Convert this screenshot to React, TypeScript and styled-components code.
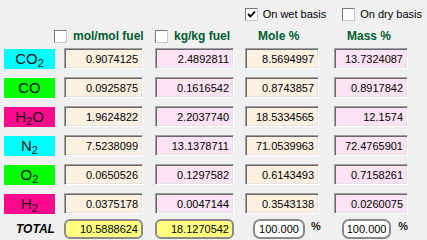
import React from "react"
import styled, { createGlobalStyle } from "styled-components"

const GlobalStyle = createGlobalStyle`
  html, body {
    margin: 0;
    padding: 0;
    background: #f0f0f0;
  }
  body {
    font-family: "Liberation Sans", Arial, sans-serif;
    width: 427px;
    height: 240px;
    overflow: hidden;
  }
`

const Panel = styled.div`
  width: 427px;
  height: 240px;
  background: #f0f0f0;
  display: flex;
  flex-direction: column;
  box-sizing: border-box;
  padding-top: 8px;
`

const TopBar = styled.div`
  display: flex;
  justify-content: flex-end;
  gap: 16px;
  padding-right: 5px;
  height: 13px;
`

const CheckLabel = styled.label`
  display: flex;
  align-items: center;
  gap: 5px;
  font-size: 11px;
  color: #000;
  line-height: 13px;
`

const Box = styled.span`
  width: 13px;
  height: 13px;
  box-sizing: border-box;
  background: #fff;
  border: 1px solid;
  border-color: #7a7a7a #c8c8c8 #c8c8c8 #7a7a7a;
  display: inline-flex;
  align-items: center;
  justify-content: center;
  flex-shrink: 0;
`

const Grid = styled.div`
  display: grid;
  grid-template-columns: 60px 91px 90px 89px 74px;
  padding-left: 4px;
  align-items: center;
`

const HeaderGrid = styled(Grid)`
  margin-top: 8px;
  height: 13px;
`

const BodyGrid = styled(Grid)`
  margin-top: 6px;
  grid-auto-rows: 21px;
  row-gap: 8px;
`

const TotalGrid = styled(Grid)`
  margin-top: 4px;
  height: 21px;
`

const HeaderCell = styled.div<{ $shift: number }>`
  display: flex;
  align-items: center;
  gap: 6px;
  margin-left: ${(p) => p.$shift}px;
  white-space: nowrap;
  font-weight: bold;
  font-size: 12px;
  color: #005c30;
`

const Species = styled.div<{ $bg: string }>`
  width: 51px;
  height: 20px;
  background: ${(p) => p.$bg};
  display: flex;
  align-items: center;
  justify-content: center;
  font-size: 15px;
  color: #111;
  line-height: 20px;
`

const Formula = styled.span`
  sub {
    font-size: 11px;
    vertical-align: -3px;
    line-height: 0;
  }
`

const Value = styled.div<{ $bg: string; $w: number }>`
  width: ${(p) => p.$w}px;
  height: 21px;
  box-sizing: border-box;
  background: ${(p) => p.$bg};
  border: 1px solid;
  border-color: #a0a0a0 #ffffff #ffffff #a0a0a0;
  box-shadow: inset 1px 1px 0 #696969, inset -1px -1px 0 #e3e3e3;
  display: flex;
  align-items: center;
  justify-content: flex-end;
  padding-right: 4px;
  font-size: 11px;
  color: #000;
`

const TotalLabel = styled.div`
  font-weight: bold;
  font-style: italic;
  font-size: 12px;
  color: #000;
  padding-left: 12px;
`

const TotalBox = styled.div`
  width: 79px;
  height: 20px;
  box-sizing: border-box;
  background: #ffff80;
  border: 2px solid #8a8a8a;
  border-radius: 6px;
  display: flex;
  align-items: center;
  justify-content: flex-end;
  padding-right: 3px;
  font-size: 11px;
  color: #000;
`

const PercentWrap = styled.div<{ $shift: number; $gap: number }>`
  display: flex;
  align-items: center;
  gap: ${(p) => p.$gap}px;
  margin-left: ${(p) => p.$shift}px;
`

const PercentBox = styled.div`
  width: 52px;
  height: 20px;
  box-sizing: border-box;
  background: #fff;
  border: 2px solid #8a8a8a;
  border-radius: 7px;
  display: flex;
  align-items: center;
  justify-content: center;
  font-size: 11px;
  color: #000;
  margin-top: 1px;
`

const Pct = styled.span`
  font-size: 11px;
  font-weight: bold;
  color: #222;
  margin-top: -5px;
`

const Check = () => (
  <svg width="9" height="9" viewBox="0 0 9 9">
    <path d="M1 4 L3.5 6.5 L8 1.5" stroke="#000" strokeWidth="1.8" fill="none" />
  </svg>
)

const CYAN = "#00ffff"
const GREEN = "#00ff00"
const PINK = "#ff0a8c"
const LINEN = "#fdf0e1"
const BLUSH = "#fde3f3"

const rows = [
  { name: "CO", sub: "2", bg: CYAN, v: ["0.9074125", "2.4892811", "8.5694997", "13.7324087"] },
  { name: "CO", sub: "", bg: GREEN, v: ["0.0925875", "0.1616542", "0.8743857", "0.8917842"] },
  { name: "H", sub: "2", tail: "O", bg: PINK, v: ["1.9624822", "2.2037740", "18.5334565", "12.1574"] },
  { name: "N", sub: "2", bg: CYAN, v: ["7.5238099", "13.1378711", "71.0539963", "72.4765901"] },
  { name: "O", sub: "2", bg: GREEN, v: ["0.0650526", "0.1297582", "0.6143493", "0.7158261"] },
  { name: "H", sub: "2", bg: PINK, v: ["0.0375178", "0.0047144", "0.3543138", "0.0260075"] },
]

export default function App() {
  return (
    <>
      <GlobalStyle />
      <Panel>
        <TopBar>
          <CheckLabel>
            <Box>
              <Check />
            </Box>
            On wet basis
          </CheckLabel>
          <CheckLabel>
            <Box />
            On dry basis
          </CheckLabel>
        </TopBar>
        <HeaderGrid>
          <div />
          <HeaderCell $shift={-10}>
            <Box />
            mol/mol fuel
          </HeaderCell>
          <HeaderCell $shift={0}>
            <Box />
            kg/kg fuel
          </HeaderCell>
          <HeaderCell $shift={13}>Mole %</HeaderCell>
          <HeaderCell $shift={13}>Mass %</HeaderCell>
        </HeaderGrid>
        <BodyGrid>
          {rows.map((r, i) => (
            <React.Fragment key={i}>
              <Species $bg={r.bg}>
                <Formula>
                  {r.name}
                  {r.sub && <sub>{r.sub}</sub>}
                  {r.tail}
                </Formula>
              </Species>
              <Value $bg={LINEN} $w={79}>{r.v[0]}</Value>
              <Value $bg={BLUSH} $w={79}>{r.v[1]}</Value>
              <Value $bg={LINEN} $w={74}>{r.v[2]}</Value>
              <Value $bg={BLUSH} $w={74}>{r.v[3]}</Value>
            </React.Fragment>
          ))}
        </BodyGrid>
        <TotalGrid>
          <TotalLabel>TOTAL</TotalLabel>
          <TotalBox>10.5888624</TotalBox>
          <TotalBox>18.1270542</TotalBox>
          <PercentWrap $shift={8} $gap={6}>
            <PercentBox>100.000</PercentBox>
            <Pct>%</Pct>
          </PercentWrap>
          <PercentWrap $shift={8} $gap={7}>
            <PercentBox>100.000</PercentBox>
            <Pct>%</Pct>
          </PercentWrap>
        </TotalGrid>
      </Panel>
    </>
  )
}
